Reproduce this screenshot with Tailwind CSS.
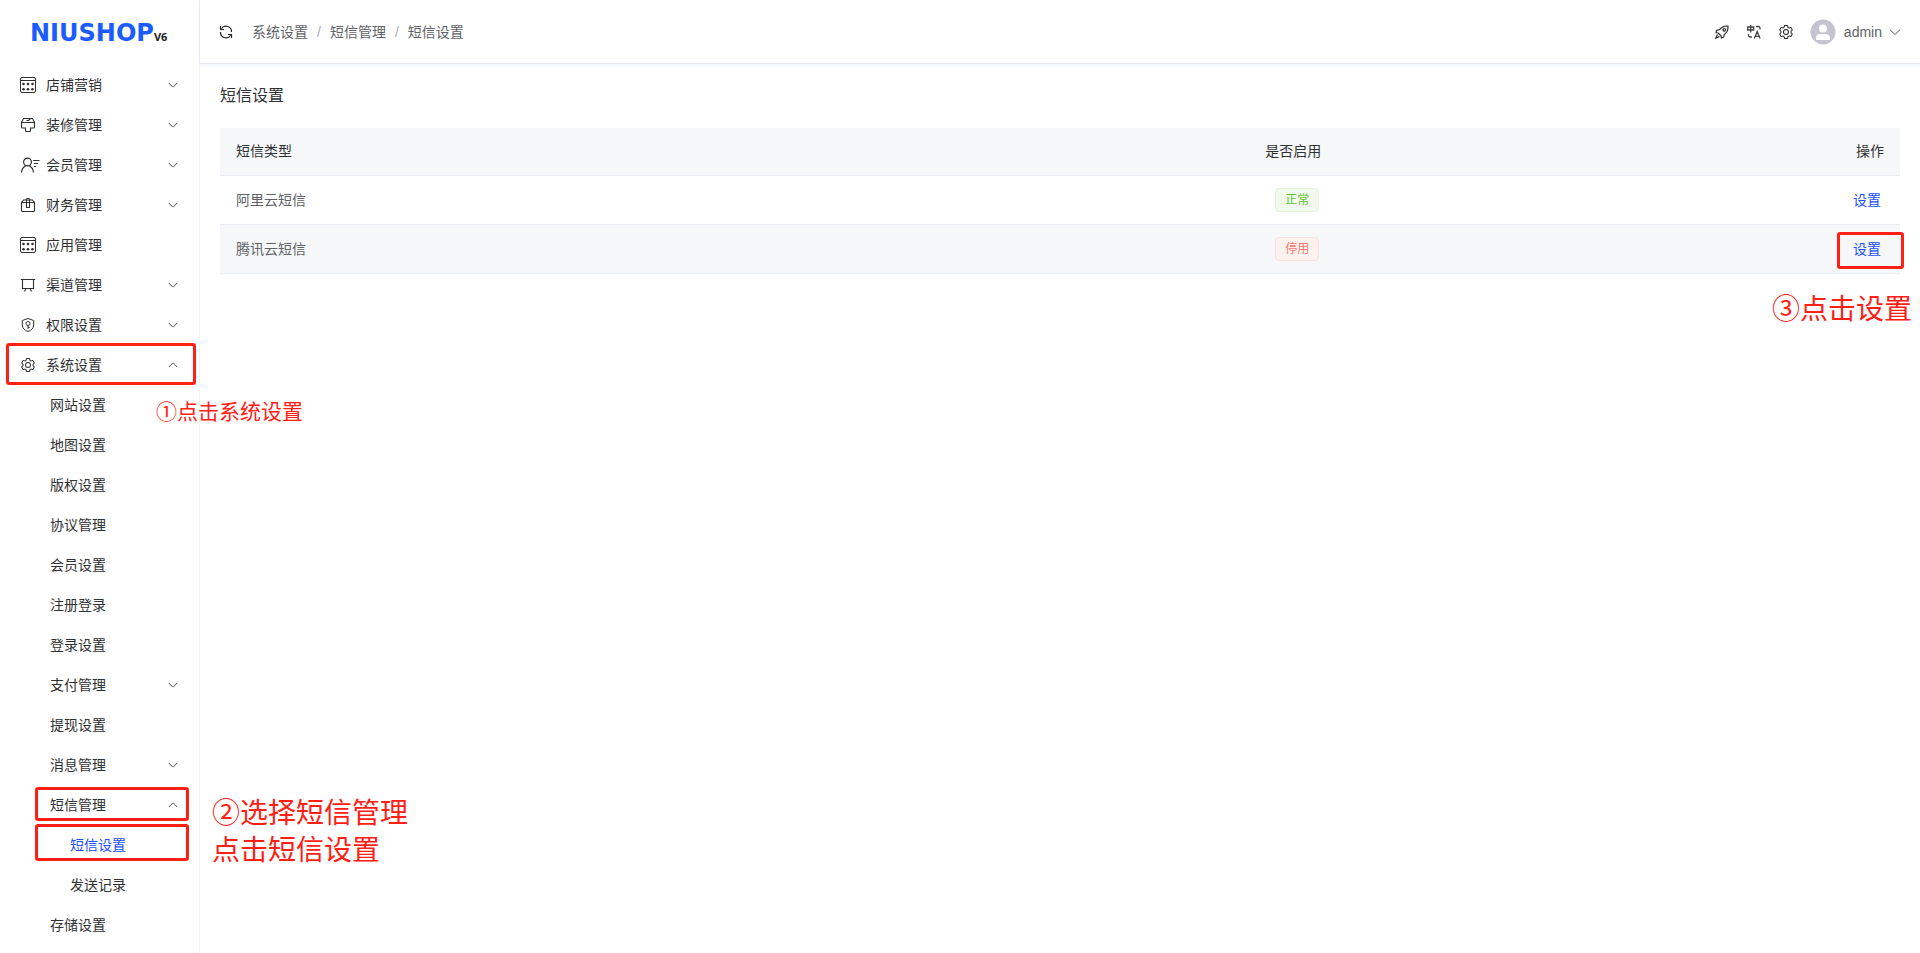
<!DOCTYPE html>
<html lang="zh-CN">
<head>
    <meta charset="UTF-8">
    <meta name="viewport" content="width=device-width, initial-scale=1.0">
    <title>短信设置</title>
    <script src="https://cdn.jsdelivr.net/npm/@tailwindcss/browser@4"></script>
</head>
<body class="min-h-screen bg-white font-['Liberation_Sans','Noto_Sans_CJK_SC',sans-serif] text-sm text-[#303133]">
    <!-- Icon set -->
    <svg class="hidden">
        <symbol id="i-down" viewBox="0 0 1024 1024"><path fill="currentColor" d="M831.872 340.864 512 652.672 192.128 340.864a30.592 30.592 0 0 0-42.752 0 29.12 29.12 0 0 0 0 41.6L489.664 714.24a32 32 0 0 0 44.672 0l340.288-331.712a29.12 29.12 0 0 0 0-41.728 30.592 30.592 0 0 0-42.752 0z"/></symbol>
        <symbol id="i-gear" viewBox="0 0 1024 1024"><path fill="currentColor" d="M600.704 64a32 32 0 0 1 30.464 22.208l35.2 109.376c14.784 7.232 28.928 15.36 42.432 24.512l112.384-24.192a32 32 0 0 1 34.432 15.36L944.32 364.8a32 32 0 0 1-4.032 37.504l-77.12 85.12a357.12 357.12 0 0 1 0 49.024l77.12 85.248a32 32 0 0 1 4.032 37.504l-88.704 153.6a32 32 0 0 1-34.432 15.296L708.8 803.904c-13.44 9.088-27.648 17.28-42.368 24.512l-35.264 109.376A32 32 0 0 1 600.704 960H423.296a32 32 0 0 1-30.464-22.208L357.696 828.48a351.616 351.616 0 0 1-42.56-24.64l-112.32 24.256a32 32 0 0 1-34.432-15.36L79.68 659.2a32 32 0 0 1 4.032-37.504l77.12-85.248a357.12 357.12 0 0 1 0-48.896l-77.12-85.248A32 32 0 0 1 79.68 364.8l88.704-153.6a32 32 0 0 1 34.432-15.296l112.32 24.256c13.568-9.152 27.776-17.408 42.56-24.64l35.2-109.312A32 32 0 0 1 423.232 64H600.64zm-23.424 64H446.72l-36.352 113.088-24.512 11.968a294.113 294.113 0 0 0-34.816 20.096l-22.656 15.36-116.224-25.088-65.28 113.152 79.68 88.192-1.92 27.136a293.12 293.12 0 0 0 0 40.192l1.92 27.136-79.808 88.192 65.344 113.152 116.224-25.024 22.656 15.296a294.113 294.113 0 0 0 34.816 20.096l24.512 11.968L446.72 896h130.688l36.48-113.152 24.448-11.904a288.282 288.282 0 0 0 34.752-20.096l22.592-15.296 116.288 25.024 65.28-113.152-79.744-88.192 1.92-27.136a293.12 293.12 0 0 0 0-40.256l-1.92-27.136 79.808-88.128-65.344-113.152-116.288 24.96-22.592-15.232a287.616 287.616 0 0 0-34.752-20.096l-24.448-11.904L577.344 128zM512 320a192 192 0 1 1 0 384 192 192 0 0 1 0-384zm0 64a128 128 0 1 0 0 256 128 128 0 0 0 0-256z"/></symbol>
        <symbol id="i-apps" viewBox="0 0 16 16" fill="none" stroke="currentColor"><rect x=".5" y=".5" width="15" height="15" rx="1.5"/><path d="M.5 3.500h15"/><g fill="currentColor" stroke="none"><circle cx="3.500" cy="7" r="1.300"/><circle cx="8" cy="7" r="1.300"/><circle cx="12.500" cy="7" r="1.300"/><circle cx="3.500" cy="12.300" r="1.300"/><circle cx="8" cy="12.300" r="1.300"/><circle cx="12.500" cy="12.300" r="1.300"/></g></symbol>
        <symbol id="i-brush" viewBox="0 0 16 16" fill="none" stroke="currentColor" stroke-width="1.1"><path d="M3.500 1.500h9l2 4v4.500a1 1 0 0 1-1 1h-3v2.500a1 1 0 0 1-1 1H6.500a1 1 0 0 1-1-1V11h-3a1 1 0 0 1-1-1V5.500zM1.500 5.500h13M6.500 3.500h2l2-2"/></symbol>
        <symbol id="i-user" viewBox="0 0 20 16" fill="none" stroke="currentColor" stroke-width="1.2"><circle cx="7.500" cy="5" r="3.900"/><path d="M1.500 15.500c.3-3.400 2-5.600 4.200-6.600M9.300 8.900c2.200 1 3.900 3.200 4.200 6.600M13 3.500h6.500M14 6.500h4M14 9.500h2"/></symbol>
        <symbol id="i-box" viewBox="0 0 16 16" fill="none" stroke="currentColor" stroke-width="1.1"><path d="M1.500 5.500h13v8a1 1 0 0 1-1 1h-11a1 1 0 0 1-1-1zM1.500 5.500l2-2.500h9l2 2.500M5.500 3c.2-1 1.200-1.500 2.500-1.500s2.300.5 2.500 1.500M6.500 3v7.500h3V3"/></symbol>
        <symbol id="i-board" viewBox="0 0 16 16" fill="none" stroke="currentColor" stroke-width="1.1"><path d="M.8 2.500h14.400M2.500 2.500v9h11v-9M6 11.500l-1.500 3M10 11.500l1.500 3"/></symbol>
        <symbol id="i-shield" viewBox="0 0 16 16" fill="none" stroke="currentColor"><path d="M8 1.500 13.700 3.500v4.500c0 3.200-2.200 5.200-5.700 6.500-3.500-1.300-5.700-3.300-5.700-6.500V3.500z"/><circle cx="8" cy="6.500" r="2"/><path d="M8 8.500v3.500M8 10.500h1.500"/></symbol>
        <symbol id="i-refresh" viewBox="0 0 16 16" fill="none" stroke="currentColor" stroke-width="1.2"><path d="M3.500 4.500A5.500 5.500 0 0 1 13.500 8M12.500 11.500A5.500 5.500 0 0 1 2.500 8M2.500 2v3.500H6M13.500 14v-3.500H10"/></symbol>
        <symbol id="i-rocket" viewBox="0 0 16 16" fill="none" stroke="currentColor" stroke-width="1.1"><path d="M14 2c-3.600-.3-6.500 1-8.500 3.700L2.700 6.300 2 8.700l2.200.3L7 11.800l.4 2.200 2.300-.8.600-2.800C13 8.500 14.300 5.600 14 2zM3.500 10.500 1.800 14.200l3.700-1.700"/><circle cx="10.200" cy="5.800" r="1.300"/></symbol>
        <symbol id="i-lang" viewBox="0 0 16 16" fill="none" stroke="currentColor" stroke-width="1.3"><path d="M1.700 3h6v3h-6zM4.700 1v7.500M10 2.500h2.500a1.500 1.500 0 0 1 1.500 1.500v1.500M2.500 10v1.500A1.500 1.500 0 0 0 4 13h2M8.300 14.500l2.900-7 2.900 7M9.200 12.300h4"/></symbol>
        <symbol id="i-avatar" viewBox="0 0 26 26"><circle cx="13" cy="13" r="12.500" fill="#c5c3cf"/><circle cx="13" cy="9.500" r="4" fill="#fff"/><path fill="#fff" d="M5.800 19.500c0-3.200 2.200-4.500 4.500-4.500h5.400c2.300 0 4.500 1.300 4.500 4.500 0 1-.6 1.500-1.500 1.500H7.300c-.9 0-1.500-.5-1.500-1.500z"/></symbol>
    </svg>

    <div class="flex min-h-screen">
        <!-- Sidebar -->
        <aside class="w-[200px] shrink-0 border-r border-[#f3f3f6]">
            <a href="#" class="flex h-[65px] items-center pl-[30px]" aria-label="NIUSHOP V6">
                <span class="font-['DejaVu_Sans'] text-2xl font-bold text-[#1a5cff]">NIUSHOP</span>
                <span class="self-end pb-5 font-['Noto_Sans'] text-[11px] font-bold text-[#222]">V6</span>
            </a>
            <nav>
                <ul>
                    <li><button class="flex h-10 w-full items-center gap-[10px] pr-5 pl-5"><svg class="size-4"><use href="#i-apps"/></svg>店铺营销<svg class="ml-auto size-3"><use href="#i-down"/></svg></button></li>
                    <li><button class="flex h-10 w-full items-center gap-[10px] pr-5 pl-5"><svg class="size-4"><use href="#i-brush"/></svg>装修管理<svg class="ml-auto size-3"><use href="#i-down"/></svg></button></li>
                    <li><button class="flex h-10 w-full items-center gap-[6px] pr-5 pl-5"><svg class="h-4 w-5"><use href="#i-user"/></svg>会员管理<svg class="ml-auto size-3"><use href="#i-down"/></svg></button></li>
                    <li><button class="flex h-10 w-full items-center gap-[10px] pr-5 pl-5"><svg class="size-4"><use href="#i-box"/></svg>财务管理<svg class="ml-auto size-3"><use href="#i-down"/></svg></button></li>
                    <li><a href="#" class="flex h-10 items-center gap-[10px] pr-5 pl-5"><svg class="size-4"><use href="#i-apps"/></svg>应用管理</a></li>
                    <li><button class="flex h-10 w-full items-center gap-[10px] pr-5 pl-5"><svg class="size-4"><use href="#i-board"/></svg>渠道管理<svg class="ml-auto size-3"><use href="#i-down"/></svg></button></li>
                    <li><button class="flex h-10 w-full items-center gap-[10px] pr-5 pl-5"><svg class="size-4"><use href="#i-shield"/></svg>权限设置<svg class="ml-auto size-3"><use href="#i-down"/></svg></button></li>
                    <li>
                        <div class="relative">
                            <button class="flex h-10 w-full items-center gap-[10px] pr-5 pl-5" aria-expanded="true"><svg class="size-4"><use href="#i-gear"/></svg>系统设置<svg class="ml-auto size-3 rotate-180"><use href="#i-down"/></svg></button>
                            <span class="pointer-events-none absolute -top-[2px] left-[6px] h-[42px] w-[190px] rounded-[3px] border-3 border-[#ff2015]"></span>
                            <p class="absolute top-[52px] left-[156px] text-[21px] leading-[30px] whitespace-nowrap text-[#ff2015]">①点击系统设置</p>
                        </div>
                        <ul>
                            <li><a href="#" class="flex h-10 items-center pl-[50px]">网站设置</a></li>
                            <li><a href="#" class="flex h-10 items-center pl-[50px]">地图设置</a></li>
                            <li><a href="#" class="flex h-10 items-center pl-[50px]">版权设置</a></li>
                            <li><a href="#" class="flex h-10 items-center pl-[50px]">协议管理</a></li>
                            <li><a href="#" class="flex h-10 items-center pl-[50px]">会员设置</a></li>
                            <li><a href="#" class="flex h-10 items-center pl-[50px]">注册登录</a></li>
                            <li><a href="#" class="flex h-10 items-center pl-[50px]">登录设置</a></li>
                            <li><button class="flex h-10 w-full items-center pr-5 pl-[50px]">支付管理<svg class="ml-auto size-3"><use href="#i-down"/></svg></button></li>
                            <li><a href="#" class="flex h-10 items-center pl-[50px]">提现设置</a></li>
                            <li><button class="flex h-10 w-full items-center pr-5 pl-[50px]">消息管理<svg class="ml-auto size-3"><use href="#i-down"/></svg></button></li>
                            <li class="relative">
                                <button class="flex h-10 w-full items-center pr-5 pl-[50px]" aria-expanded="true">短信管理<svg class="ml-auto size-3 rotate-180"><use href="#i-down"/></svg></button>
                                <span class="pointer-events-none absolute top-[2px] left-[35px] h-[34px] w-[154px] rounded-[3px] border-3 border-[#ff2015]"></span>
                                <span class="pointer-events-none absolute top-[39px] left-[35px] h-[37px] w-[154px] rounded-[3px] border-3 border-[#ff2015]"></span>
                                <p class="absolute top-[10px] left-[212px] text-[28px] leading-[37px] whitespace-nowrap text-[#ff2015]">②选择短信管理<br>点击短信设置</p>
                                <ul>
                                    <li><a href="#" class="flex h-10 items-center pl-[70px] text-[#1a4fff]">短信设置</a></li>
                                    <li><a href="#" class="flex h-10 items-center pl-[70px]">发送记录</a></li>
                                </ul>
                            </li>
                            <li><a href="#" class="flex h-10 items-center pl-[50px]">存储设置</a></li>
                        </ul>
                    </li>
                </ul>
            </nav>
        </aside>

        <div class="min-w-0 flex-1">
            <!-- Top bar -->
            <header class="-ml-px flex h-16 items-center justify-between border-b border-l border-[#e9e9f8] px-[18px] text-[#606266] shadow-[0_2px_3px_#f3f7ff]">
                <div class="flex items-center">
                    <button class="text-[#222]" aria-label="刷新"><svg class="size-4"><use href="#i-refresh"/></svg></button>
                    <nav class="ml-[18px] flex items-center">
                        <a href="#">系统设置</a>
                        <span class="mx-[9px] text-[#a8abb2]">/</span>
                        <a href="#">短信管理</a>
                        <span class="mx-[9px] text-[#a8abb2]">/</span>
                        <span>短信设置</span>
                    </nav>
                </div>
                <div class="flex items-center gap-4">
                    <button class="text-[#222]" aria-label="快捷入口"><svg class="size-4"><use href="#i-rocket"/></svg></button>
                    <button class="text-[#444]" aria-label="切换语言"><svg class="size-4"><use href="#i-lang"/></svg></button>
                    <button class="text-[#222]" aria-label="设置"><svg class="size-4"><use href="#i-gear"/></svg></button>
                    <button class="flex items-center"><svg class="mr-2 size-[26px]"><use href="#i-avatar"/></svg>admin<svg class="ml-[6px] size-[14px]"><use href="#i-down"/></svg></button>
                </div>
            </header>

            <!-- SMS settings -->
            <main class="p-5">
                <h1 class="text-base leading-6">短信设置</h1>
                <table class="mt-5 w-full table-fixed border-collapse">
                    <thead>
                        <tr class="h-[47px] border-b border-[#ebeef5] bg-[#f5f7f9]">
                            <th class="w-[55%] px-4 text-left font-normal">短信类型</th>
                            <th class="w-[18%] pr-5 pl-4 text-center font-normal">是否启用</th>
                            <th class="px-4 text-right font-normal">操作</th>
                        </tr>
                    </thead>
                    <tbody class="text-[#606266]">
                        <tr class="h-[49px] border-b border-[#ebeef5]">
                            <td class="px-4">阿里云短信</td>
                            <td class="pr-4 pl-5 text-center"><span class="inline-flex h-6 items-center rounded border border-[#e1f3d8] bg-[#f0f9eb] px-[9px] align-middle text-xs text-[#67c23a]">正常</span></td>
                            <td class="px-[19px] text-right"><a href="#" class="text-[#1a4fff]">设置</a></td>
                        </tr>
                        <tr class="h-[49px] border-b border-[#ebeef5] bg-[#f5f7f9]">
                            <td class="px-4">腾讯云短信</td>
                            <td class="pr-4 pl-5 text-center"><span class="inline-flex h-6 items-center rounded border border-[#ffe0dd] bg-[#fff2ee] px-[9px] align-middle text-xs text-[#f9786c]">停用</span></td>
                            <td class="relative px-[19px] text-right">
                                <a href="#" class="text-[#1a4fff]">设置</a>
                                <span class="pointer-events-none absolute top-[7px] -right-[4px] h-[37px] w-[67px] rounded-[3px] border-3 border-[#ff2015]"></span>
                                <p class="absolute top-[66px] -right-[12px] text-[28px] leading-[37px] whitespace-nowrap text-[#ff2015]">③点击设置</p>
                            </td>
                        </tr>
                    </tbody>
                </table>
            </main>
        </div>
    </div>
</body>
</html>
